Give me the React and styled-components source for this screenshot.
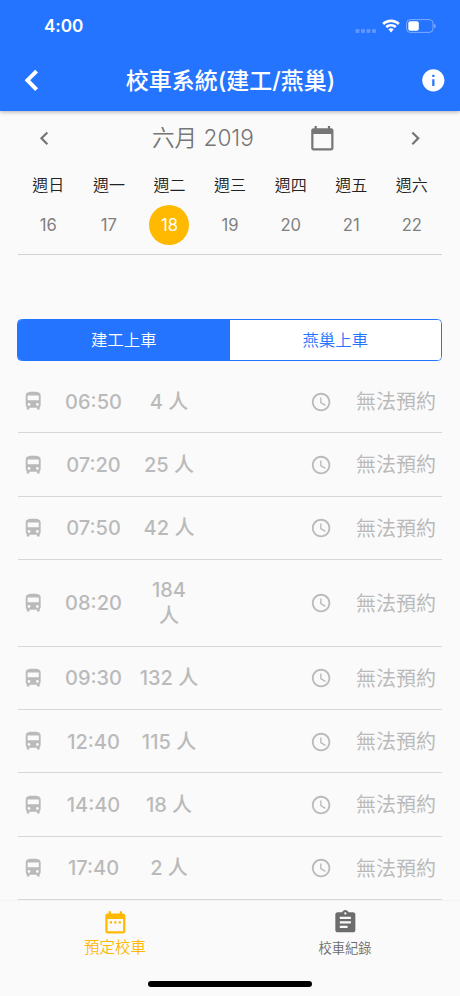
import React from "react";
import styled, { createGlobalStyle } from "styled-components";

const BLUE = "#2574ff";
const AMBER = "#ffb900";

const GlobalStyle = createGlobalStyle`
  *, *::before, *::after { box-sizing: border-box; }
  body {
    margin: 0;
    background: #fafafa;
    font-family: Inter, "Noto Sans CJK TC", sans-serif;
  }
  button { font: inherit; color: inherit; border: 0; padding: 0; background: none; }
`;

const Screen = styled.div`
  width: 460px;
  height: 996px;
  display: flex;
  flex-direction: column;
  overflow: hidden;
  background: #fafafa;
`;

const Header = styled.header`
  flex: none;
  height: 111px;
  background: ${BLUE};
  color: #fff;
  box-shadow: 0 1px 4px rgba(0, 0, 0, 0.3);
  z-index: 1;
`;

const StatusBar = styled.div`
  height: 50px;
  padding: 1px 24px 0 44px;
  display: flex;
  align-items: center;
`;

const Clock = styled.span`
  flex: 1;
  font-size: 17.2px;
  font-weight: 600;
  letter-spacing: -0.1px;
`;

const StatusIcon = styled.svg`
  display: block;
  margin-left: ${(p) => p.$gap || 0}px;
`;

const TitleBar = styled.div`
  height: 61px;
  padding: 0 13px 0 17px;
  display: grid;
  grid-template-columns: 28px 1fr 28px;
  align-items: center;
`;

const Title = styled.h1`
  margin: 0;
  padding: 1px 3px 0 0;
  text-align: center;
  font-size: 23px;
  line-height: 32px;
  font-weight: 500;
  white-space: nowrap;
`;

const IconButton = styled.button`
  display: flex;
  align-items: center;
  justify-content: center;
`;

const Glyph = styled.svg`
  display: block;
  flex: none;
  fill: currentColor;
`;

const Body = styled.main`
  flex: none;
  height: 790px;
  padding: 0 18px;
  overflow: hidden;
`;

const Calendar = styled.section`
  height: 144px;
  border-bottom: 1px solid #d3d3d3;
`;

const MonthBar = styled.div`
  height: 54px;
  display: grid;
  grid-template-columns: 53px 1fr 60px 37px 53px;
  align-items: center;
  color: #767676;
`;

const Month = styled.div`
  padding-left: 81px;
  font-size: 22.6px;
  line-height: 32px;
  font-weight: 350;
  color: #767676;
  white-space: nowrap;
`;

const Week = styled.div`
  display: grid;
  grid-template-columns: repeat(7, 60.6px);
`;

const Weekday = styled.div`
  height: 40px;
  line-height: 40px;
  text-align: center;
  font-size: 16px;
  font-weight: 350;
  color: #222;
`;

const Day = styled.div`
  width: 40px;
  height: 40px;
  margin: 0 auto;
  border-radius: 50%;
  display: flex;
  align-items: center;
  justify-content: center;
  font-size: 16.6px;
  color: ${(p) => (p.$selected ? "#fff" : "#808080")};
  background: ${(p) => (p.$selected ? AMBER : "transparent")};
`;

const Segments = styled.div`
  height: 42px;
  margin: 64px 0 0 -1px;
  display: flex;
  border: 1px solid ${BLUE};
  border-radius: 4.5px;
  overflow: hidden;
`;

const Segment = styled.button`
  flex: 1;
  padding-top: 1px;
  font-size: 16.4px;
  line-height: 39px;
  font-weight: 350;
  color: ${(p) => (p.$active ? "#fff" : BLUE)};
  background: ${(p) => (p.$active ? BLUE : "#fff")};
`;

const List = styled.div`
  padding-top: 9px;
`;

const Row = styled.div`
  height: ${(p) => (p.$tall ? 86.7 : 63.33)}px;
  padding: 1px 0 0 4px;
  border-bottom: 1px solid #d7d7d7;
  display: grid;
  grid-template-columns: 26px 91px 60px 110.5px 23px 1fr;
  align-items: center;
  color: #bababa;
  font-size: 20px;
  line-height: 26px;
`;

const Time = styled.span`
  text-align: center;
  font-weight: 450;
`;

const Riders = styled.span`
  justify-self: center;
  text-align: center;
  white-space: pre;
  font-weight: 450;
`;

const State = styled.span`
  justify-self: end;
  padding: 1px 6px 0 0;
`;

const TabBar = styled.nav`
  position: relative;
  flex: none;
  height: 95px;
  display: grid;
  grid-template-columns: 1fr 1fr;
  background: #fafafa;
  box-shadow: 0 -1px 1px rgba(0, 0, 0, 0.025);
`;

const Tab = styled.button`
  height: 62px;
  padding-top: 8px;
  display: flex;
  flex-direction: column;
  align-items: center;
  color: ${(p) => (p.$active ? AMBER : "#6c6c6c")};
`;

const TabLabel = styled.span`
  margin-top: 1px;
  font-size: ${(p) => (p.$active ? 15.5 : 13.3)}px;
  line-height: 22px;
  font-weight: 350;
`;

const HomeIndicator = styled.div`
  position: absolute;
  left: 148px;
  bottom: 9px;
  width: 164px;
  height: 6px;
  border-radius: 3px;
  background: #000;
`;

const PATHS = {
  left: "M15.41 7.41 14 6l-6 6 6 6 1.41-1.41L10.83 12z",
  right: "M10 6 8.59 7.41 13.17 12l-4.58 4.59L10 18l6-6z",
  back: "M18 4.9 15.4 2.4 6 12l9.4 9.6 2.6-2.5-7-7.1z",
  info: "M12 2C6.48 2 2 6.48 2 12s4.48 10 10 10 10-4.48 10-10S17.52 2 12 2zm1 15h-2v-6h2v6zm0-8h-2V7h2v2z",
  calendar:
    "M20 3h-1V1h-2v2H7V1H5v2H4c-1.1 0-2 .9-2 2v16c0 1.1.9 2 2 2h16c1.1 0 2-.9 2-2V5c0-1.1-.9-2-2-2zm0 18H4V8h16v13z",
  bus: "M4 16c0 .88.39 1.67 1 2.22V20c0 .55.45 1 1 1h1c.55 0 1-.45 1-1v-1h8v1c0 .55.45 1 1 1h1c.55 0 1-.45 1-1v-1.78c.61-.55 1-1.34 1-2.22V6c0-3.5-3.58-4-8-4s-8 .5-8 4v10zm3.5 1c-.83 0-1.5-.67-1.5-1.5S6.67 14 7.5 14s1.5.67 1.5 1.5S8.33 17 7.5 17zm9 0c-.83 0-1.5-.67-1.5-1.5s.67-1.5 1.5-1.5 1.5.67 1.5 1.5-.67 1.5-1.5 1.5zm1.5-6H6V6h12v5z",
  clock:
    "M11.99 2C6.47 2 2 6.48 2 12s4.47 10 9.99 10C17.52 22 22 17.52 22 12S17.52 2 11.99 2zM12 20c-4.42 0-8-3.58-8-8s3.58-8 8-8 8 3.58 8 8-3.58 8-8 8zm.5-13H11v6l5.25 3.15.75-1.23-4.5-2.67z",
  booking:
    "M9 11H7v2h2v-2zm4 0h-2v2h2v-2zm4 0h-2v2h2v-2zm2-7h-1V2h-2v2H8V2H6v2H5c-1.11 0-1.99.9-1.99 2L3 20c0 1.1.89 2 2 2h14c1.1 0 2-.9 2-2V6c0-1.1-.9-2-2-2zm0 16H5V9h14v11z",
  record:
    "M19 3h-4.18C14.4 1.84 13.3 1 12 1c-1.3 0-2.4.84-2.82 2H5c-1.1 0-2 .9-2 2v14c0 1.1.9 2 2 2h14c1.1 0 2-.9 2-2V5c0-1.1-.9-2-2-2zm-7 0c.55 0 1 .45 1 1s-.45 1-1 1-1-.45-1-1 .45-1 1-1zm2 14H7v-2h7v2zm3-4H7v-2h10v2zm0-4H7V7h10v2z",
};

function Icon({ name, size = 26.7 }) {
  return (
    <Glyph width={size} height={size} viewBox="0 0 24 24" aria-hidden="true">
      <path d={PATHS[name]} />
    </Glyph>
  );
}

const WEEK = [
  ["週日", 16],
  ["週一", 17],
  ["週二", 18],
  ["週三", 19],
  ["週四", 20],
  ["週五", 21],
  ["週六", 22],
];

const BUSES = [
  ["06:50", "4 人"],
  ["07:20", "25 人"],
  ["07:50", "42 人"],
  ["08:20", "184\n人"],
  ["09:30", "132 人"],
  ["12:40", "115 人"],
  ["14:40", "18 人"],
  ["17:40", "2 人"],
];

export default function App() {
  return (
    <Screen>
      <GlobalStyle />
      <Header>
        <StatusBar>
          <Clock>4:00</Clock>
          <StatusIcon width="22" height="14" viewBox="0 0 22 14" fill="#fff" fillOpacity="0.25">
            <rect x="0.5" y="10" width="4" height="4" rx="1" />
            <rect x="6" y="10" width="4" height="4" rx="1" />
            <rect x="11.5" y="10" width="4" height="4" rx="1" />
            <rect x="17" y="10" width="4" height="4" rx="1" />
          </StatusIcon>
          <StatusIcon $gap={5} width="18" height="14" viewBox="0 0 18 14" fill="#fff">
            <path d="M9 0.5C5.6 0.5 2.4 1.8 0.2 4L2.1 6C4 4.2 6.4 3.2 9 3.2S14 4.2 15.9 6L17.8 4C15.6 1.8 12.4 0.5 9 0.5Z" />
            <path d="M9 5C6.8 5 4.8 5.8 3.3 7.2L5.1 9.1C6.2 8.1 7.5 7.5 9 7.5S11.8 8.1 12.9 9.1L14.7 7.2C13.2 5.8 11.2 5 9 5Z" />
            <path d="M9 9.2C7.9 9.2 7 9.6 6.3 10.3L9 13.5L11.7 10.3C11 9.6 10.1 9.2 9 9.2Z" />
          </StatusIcon>
          <StatusIcon $gap={6} width="30" height="14" viewBox="0 0 30 14">
            <rect x="0.6" y="0.6" width="26.4" height="12.8" rx="3.6" fill="none" stroke="#fff" strokeOpacity="0.4" />
            <rect x="2.3" y="2.3" width="10.5" height="9.4" rx="2" fill="#fff" />
            <path d="M28.2 4.7v4.6c.9-.4 1.5-1.3 1.5-2.3s-.6-1.9-1.5-2.3z" fill="#fff" fillOpacity="0.45" />
          </StatusIcon>
        </StatusBar>
        <TitleBar>
          <IconButton aria-label="返回"><Icon name="back" /></IconButton>
          <Title>校車系統(建工/燕巢)</Title>
          <IconButton aria-label="資訊"><Icon name="info" /></IconButton>
        </TitleBar>
      </Header>
      <Body>
        <Calendar>
          <MonthBar>
            <IconButton aria-label="上一週"><Icon name="left" /></IconButton>
            <Month>六月 2019</Month>
            <IconButton aria-label="選擇日期"><Icon name="calendar" /></IconButton>
            <span />
            <IconButton aria-label="下一週"><Icon name="right" /></IconButton>
          </MonthBar>
          <Week>
            {WEEK.map(([name]) => <Weekday key={name}>{name}</Weekday>)}
            {WEEK.map(([name, day]) => <Day key={day} $selected={day === 18}>{day}</Day>)}
          </Week>
        </Calendar>
        <Segments>
          <Segment $active>建工上車</Segment>
          <Segment>燕巢上車</Segment>
        </Segments>
        <List>
          {BUSES.map(([time, riders]) => (
            <Row key={time} $tall={riders.includes("\n")}>
              <Icon name="bus" size={22.4} />
              <Time>{time}</Time>
              <Riders>{riders}</Riders>
              <span />
              <Icon name="clock" size={22.2} />
              <State>無法預約</State>
            </Row>
          ))}
        </List>
      </Body>
      <TabBar>
        <Tab $active><Icon name="booking" /><TabLabel $active>預定校車</TabLabel></Tab>
        <Tab><Icon name="record" /><TabLabel>校車紀錄</TabLabel></Tab>
        <HomeIndicator />
      </TabBar>
    </Screen>
  );
}
